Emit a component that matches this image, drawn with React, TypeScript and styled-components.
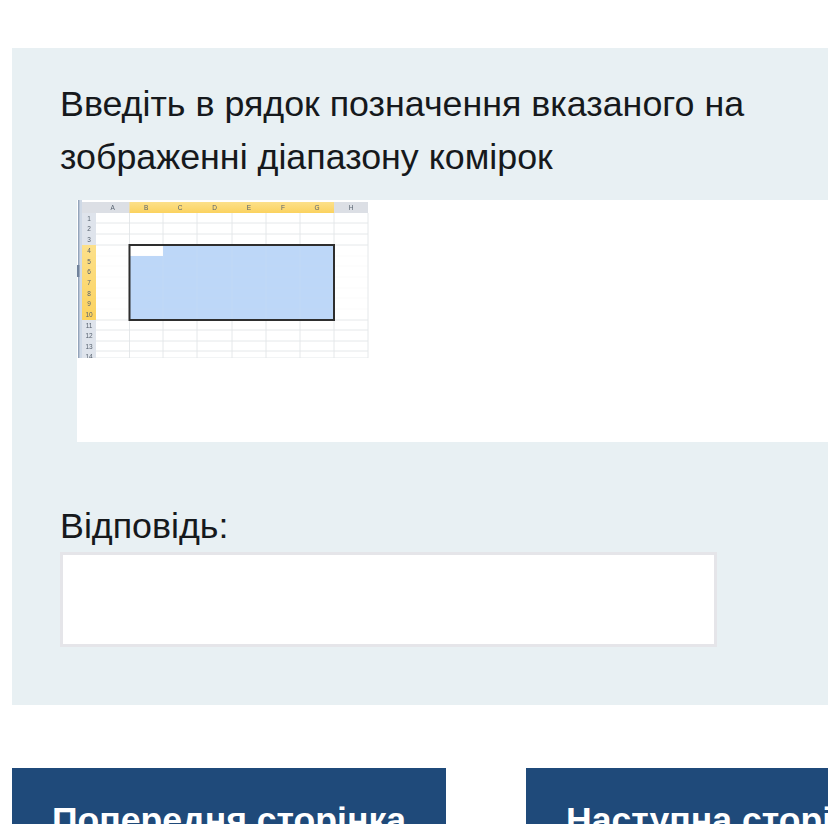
import React from "react";
import styled, { createGlobalStyle } from "styled-components";

const Global = createGlobalStyle`
  html, body { margin: 0; padding: 0; background: #fff; overflow: hidden; }
  body { font-family: "Liberation Sans", Arial, sans-serif; }
`;

const Page = styled.div`
  width: 828px;
  height: 824px;
  overflow: hidden;
  padding: 48px 0 0 12px;
  box-sizing: border-box;
`;

const Panel = styled.section`
  width: 900px;
  height: 657px;
  box-sizing: border-box;
  padding: 30px 48px 0;
  background: #e8f0f3;
`;

const Question = styled.p`
  margin: 0;
  width: 720px;
  font-size: 35.8px;
  line-height: 53px;
  color: #16191c;
`;

const Figure = styled.div`
  margin: 16px 0 0 17px;
  height: 242px;
  width: 835px;
  background: #fff;
`;

const Label = styled.div`
  margin-top: 62px;
  font-size: 35.8px;
  line-height: 44px;
  color: #16191c;
`;

const Input = styled.input`
  display: block;
  margin-top: 4px;
  width: 657px;
  height: 95px;
  box-sizing: border-box;
  border: 3px solid #e5e5e9;
  background: #fff;
  outline: none;
`;

const Buttons = styled.div`
  display: flex;
  gap: 80px;
  margin-top: 63px;
`;

const NavButton = styled.button`
  flex: none;
  padding: 32px 40px 28px;
  box-sizing: border-box;
  border: 0;
  background: #1f4a7a;
  color: #fff;
  font-family: inherit;
  font-weight: 700;
  font-size: 35.6px;
  line-height: 40px;
  text-align: left;
  white-space: nowrap;
  align-self: flex-start;
`;

const columns = [
  { label: "A", x: 19, w: 33.5 },
  { label: "B", x: 52.5, w: 33.5 },
  { label: "C", x: 86, w: 34 },
  { label: "D", x: 120, w: 35 },
  { label: "E", x: 155, w: 34 },
  { label: "F", x: 189, w: 34 },
  { label: "G", x: 223, w: 34 },
  { label: "H", x: 257, w: 34 },
];

const rowLines = [13, 23, 34, 45, 56, 66, 77, 88, 98, 109, 120, 130, 141, 151, 158];

const Sheet = () => (
  <svg width="292" height="158" viewBox="0 0 292 158" style={{ display: "block" }}>
    <defs>
      <filter id="soft" x="-2%" y="-2%" width="104%" height="104%">
        <feGaussianBlur stdDeviation="0.5" />
      </filter>
      <linearGradient id="hdr" x1="0" x2="0" y1="0" y2="1">
        <stop offset="0" stopColor="#fce08a" />
        <stop offset="1" stopColor="#fbd25f" />
      </linearGradient>
    </defs>
    <rect x="0" y="0" width="292" height="158" fill="#fff" />
    <g filter="url(#soft)" fontFamily="Liberation Sans, sans-serif" fontSize="6.5" textAnchor="middle" fill="#56616e">
      <rect x="1" y="0" width="4" height="158" fill="#cfd9e6" />
      <rect x="1" y="0" width="1.4" height="158" fill="#93a4ba" />
      <rect x="0" y="65" width="2.4" height="12" fill="#6f829b" />
      <rect x="5" y="2" width="286" height="11" fill="#dcdfe5" />
      <rect x="5" y="13" width="14" height="145" fill="#dfe4ec" />
      <rect x="52.5" y="2" width="204.5" height="11" fill="url(#hdr)" />
      <rect x="5" y="45" width="14" height="75" fill="url(#hdr)" />
      {columns.map((c) => (
        <text key={c.label} x={c.x + c.w / 2} y="10">{c.label}</text>
      ))}
      {rowLines.slice(0, 14).map((y, i) => (
        <text key={y} x="12" y={y + 8}>{i + 1}</text>
      ))}
      <rect x="52.5" y="45" width="204.5" height="75" fill="#bdd7f8" />
      <rect x="53" y="45" width="33" height="11" fill="#fff" />
      {rowLines.slice(1).map((y) => (
        <line key={y} x1="19" x2="291" y1={y} y2={y} stroke="#e2e5e8" strokeWidth="0.9" opacity={y > 45 && y < 120 ? 0.1 : 1} />
      ))}
      {columns.map((c) => (
        <React.Fragment key={c.x}>
          <line x1={c.x + c.w} x2={c.x + c.w} y1="13" y2="45" stroke="#e2e5e8" strokeWidth="0.9" />
          <line x1={c.x + c.w} x2={c.x + c.w} y1="45" y2="120" stroke="#e2e5e8" strokeWidth="0.9" opacity={c.x < 52 || c.x >= 257 ? 1 : 0.12} />
          <line x1={c.x + c.w} x2={c.x + c.w} y1="120" y2="158" stroke="#e2e5e8" strokeWidth="0.9" />
        </React.Fragment>
      ))}
      <rect x="52.5" y="45" width="204.5" height="75" fill="none" stroke="#2f2f2f" strokeWidth="2" />
    </g>
  </svg>
);

export default function App() {
  return (
    <Page>
      <Global />
      <Panel>
        <Question>Введіть в рядок позначення вказаного на зображенні діапазону комірок</Question>
        <Figure>
          <Sheet />
        </Figure>
        <Label>Відповідь:</Label>
        <Input type="text" />
      </Panel>
      <Buttons>
        <NavButton>Попередня сторінка</NavButton>
        <NavButton>Наступна сторінка</NavButton>
      </Buttons>
    </Page>
  );
}
